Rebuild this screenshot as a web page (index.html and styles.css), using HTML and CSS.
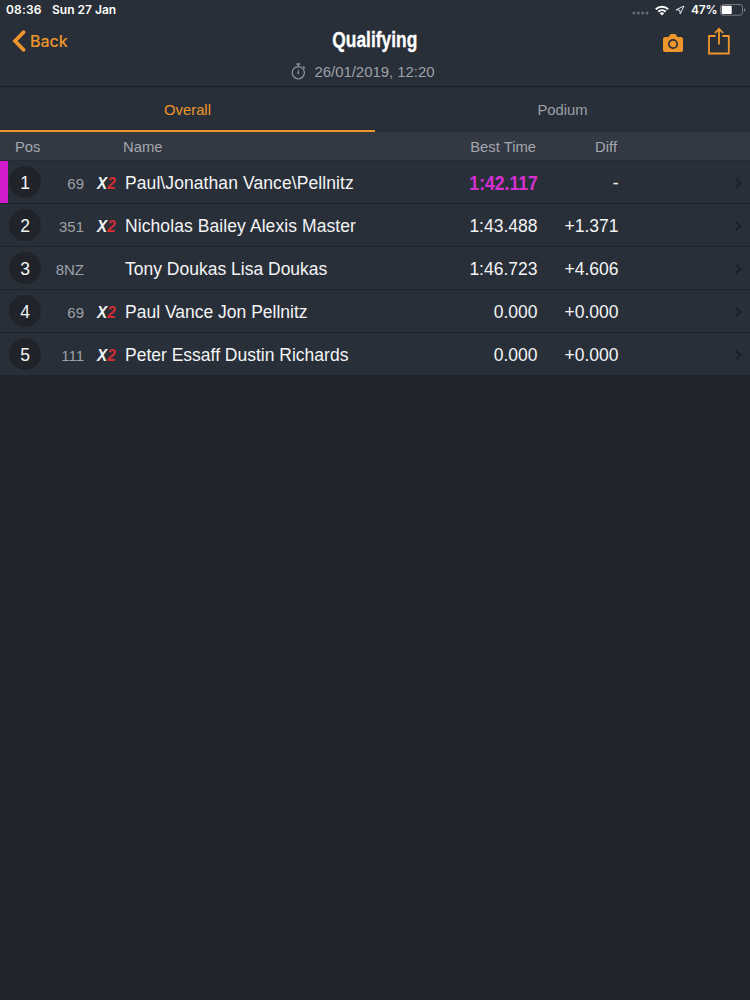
FILE: index.html
```html
<!DOCTYPE html>
<html lang="en">
<head>
<meta charset="utf-8">
<title>Qualifying</title>
<link rel="stylesheet" href="styles.css">
</head>
<body>
<svg class="defs" width="0" height="0" aria-hidden="true">
  <symbol id="chevron" viewBox="0 0 9 12"><path d="M1.5 1.5 6.5 6 1.5 10.5" fill="none" stroke="currentColor" stroke-width="2"/></symbol>
</svg>
<header class="header">
  <div class="status">
    <span class="clock">08:36</span><span class="date">Sun 27 Jan</span>
    <span class="indicators">
      <svg class="dots" width="17" height="4" viewBox="0 0 17 4"><g fill="#666b73"><circle cx="2" cy="2" r="1.5"/><circle cx="6.3" cy="2" r="1.5"/><circle cx="10.6" cy="2" r="1.5"/><circle cx="15" cy="2" r="1.5"/></g></svg>
      <svg class="wifi" width="14" height="11" viewBox="0 0 14 11"><g fill="none" stroke="#fff" stroke-width="2"><path d="M.8 4.3a8.8 8.8 0 0 1 12.4 0"/><path d="M3.3 6.8a5.3 5.3 0 0 1 7.4 0"/></g><path d="M4.8 8.3a3.1 3.1 0 0 1 4.4 0L7 10.6z" fill="#fff"/></svg>
      <svg class="location" width="10" height="10" viewBox="0 0 10 10"><path d="M9 1 1 4.8l3.8.4L5.2 9z" fill="none" stroke="#e6e7e9" stroke-width="1" stroke-linejoin="round"/></svg>
      <span class="percent">47%</span>
      <svg class="battery" width="26" height="12" viewBox="0 0 26 12"><rect x=".5" y=".6" width="22" height="10.6" rx="2.5" fill="none" stroke="#777c84"/><rect x="1.7" y="1.8" width="10" height="8.2" rx="1" fill="#fff"/><path d="M24 4.2q1.5.5 1.5 1.8T24 7.8z" fill="#777c84"/></svg>
    </span>
  </div>
  <div class="nav">
    <a class="back"><svg width="14" height="22" viewBox="0 0 14 22"><path d="M11.5 2.2 3 11l8.5 8.8" fill="none" stroke="#ee962b" stroke-width="3.8" stroke-linecap="round"/></svg><span>Back</span></a>
    <h1 class="title"><span>Qualifying</span></h1>
    <div class="actions">
      <svg class="camera" width="20" height="18" viewBox="0 0 20 18"><path fill="#ee962b" d="M2 3h3.5L7 .8Q7.5 0 8.3 0h3.4q.8 0 1.3.8L14.5 3H18q2 0 2 2v11q0 2-2 2H2q-2 0-2-2V5q0-2 2-2z"/><circle cx="10" cy="10" r="4.2" fill="#ee962b" stroke="#292f38" stroke-width="1.7"/></svg>
      <svg class="share" width="22" height="28" viewBox="0 0 22 28"><g fill="none" stroke="#ee962b" stroke-width="1.8"><path d="M7.5 9H1v17.5h19.8V9h-6.5M11 17.5V2M7 6l4-4.2L15 6"/></g></svg>
    </div>
  </div>
  <div class="when"><svg width="15" height="17" viewBox="0 0 15 17"><g fill="none" stroke="#8e929b" stroke-width="1.3"><circle cx="7.3" cy="9.7" r="6.1"/><path d="M5.4 1h3.8M7.3 1v2.5M12 3.5l1.8 1.7"/></g><path d="M7.3 5.5 8.2 10.2a.9.9 0 1 1-1.8 0z" fill="#8e929b"/></svg><span>26/01/2019, 12:20</span></div>
</header>
<nav class="tabs"><a class="tab active">Overall</a><a class="tab">Podium</a></nav>
<main class="table">
  <div class="columns row"><span class="pos">Pos</span><span class="name">Name</span><span class="time">Best Time</span><span class="diff">Diff</span></div>
  <div class="entry row first"><span class="badge">1</span><span class="car">69</span><span class="logo"><b>X</b><i>2</i></span><span class="name wide">Paul\Jonathan Vance\Pellnitz</span><span class="time best"><span>1:42.117</span></span><span class="diff">-</span><svg class="go" width="9" height="12"><use href="#chevron"/></svg></div>
  <div class="entry row"><span class="badge">2</span><span class="car">351</span><span class="logo"><b>X</b><i>2</i></span><span class="name wide">Nicholas Bailey Alexis Master</span><span class="time">1:43.488</span><span class="diff">+1.371</span><svg class="go" width="9" height="12"><use href="#chevron"/></svg></div>
  <div class="entry row"><span class="badge">3</span><span class="car">8NZ</span><span class="logo"></span><span class="name">Tony Doukas Lisa Doukas</span><span class="time">1:46.723</span><span class="diff">+4.606</span><svg class="go" width="9" height="12"><use href="#chevron"/></svg></div>
  <div class="entry row"><span class="badge">4</span><span class="car">69</span><span class="logo"><b>X</b><i>2</i></span><span class="name">Paul Vance Jon Pellnitz</span><span class="time">0.000</span><span class="diff">+0.000</span><svg class="go" width="9" height="12"><use href="#chevron"/></svg></div>
  <div class="entry row"><span class="badge">5</span><span class="car">111</span><span class="logo"><b>X</b><i>2</i></span><span class="name">Peter Essaff Dustin Richards</span><span class="time">0.000</span><span class="diff">+0.000</span><svg class="go" width="9" height="12"><use href="#chevron"/></svg></div>
</main>
</body>
</html>
```
FILE: styles.css
```css
* { box-sizing: border-box; }
body { margin: 0; min-height: 1000px; background: #20252c; color: #f3f4f6; font-family: "Liberation Sans", Arial, sans-serif; }
.defs { display: block; height: 0; }
.header { height: 87px; background: #292f38; border-bottom: 1px solid #191d24; }
.status { height: 20px; display: flex; align-items: center; padding: 0 4px 0 6px; font: 600 12px/20px Inter, sans-serif; color: #fff; }
.clock { width: 46px; letter-spacing: .2px; }
.indicators { margin-left: auto; display: flex; align-items: center; }
.dots { margin: 6px 6px 0 0; }
.wifi { margin-right: 6px; }
.location { margin-right: 6px; }
.percent { margin-right: 4px; width: 25px; letter-spacing: -.2px; }
.nav { height: 42px; display: grid; grid-template-columns: 200px 350px 200px; align-items: center; }
.back { display: flex; align-items: center; padding-left: 12px; gap: 4px; color: #ee962b; font: 500 16px/20px Inter, sans-serif; }
.title { margin: 0; text-align: center; font-size: 22px; line-height: 40px; height: 42px; color: #fff; }
.title span { display: inline-block; transform: scaleX(.79); -webkit-text-stroke: .3px #fff; }
.actions { display: flex; justify-content: flex-end; align-items: center; gap: 25px; padding-right: 20px; }
.camera { margin-top: 3px; }
.when { display: flex; justify-content: center; align-items: center; gap: 8px; height: 18px; color: #9da0a8; font-size: 15px; }
.when svg { margin-left: -24px; }
.when span { letter-spacing: -.05px; }
.tabs { height: 45px; display: flex; background: #292f38; }
.tab { flex: 1; text-align: center; font-size: 14.8px; line-height: 46px; color: #9da0a8; }
.active { color: #ee962b; border-bottom: 2px solid #ee962b; }
.row { display: grid; align-items: center; }
.columns { height: 29px; grid-template-columns: 123px 300px 113px 81px; background: #333943; color: #a3a6ad; font-size: 14.8px; border-bottom: 1px solid #242932; }
.columns span { padding-top: 2px; }
.columns .pos { padding-left: 15px; }
.time, .diff { text-align: right; }
.entry { height: 43px; grid-template-columns: 32px 43px 41px 313px 99px 81px 1fr; padding: 0 7px 0 9px; background: #292f38; border-bottom: 1px solid #1f242c; font-size: 17.5px; }
.entry .name, .entry .time, .entry .diff { padding-top: 2px; }
.entry .time, .entry .diff { margin-right: -.5px; }
.wide { letter-spacing: .085px; }
.first { background: linear-gradient(90deg, #d21bcb 8px, #292f38 8px); }
.badge { width: 32px; height: 32px; border-radius: 50%; background: #20242a; text-align: center; line-height: 34px; }
.car { padding-top: 2px; text-align: right; font-size: 15px; color: #9da0a8; }
.logo { margin-left: 13px; padding-top: 1px; font: italic 700 16.5px/18px "Liberation Sans", sans-serif; white-space: nowrap; transform: scaleX(.92); transform-origin: left; }
.logo b, .logo i { display: inline-block; }
.logo i { color: #d52b32; }
.entry .best { color: #d62fd2; font-weight: 700; font-size: 20px; padding-top: 2px; }
.best span { display: inline-block; transform: scaleX(.88); transform-origin: right; }
.go { justify-self: end; margin-top: 1px; color: #1b2027; }
```
